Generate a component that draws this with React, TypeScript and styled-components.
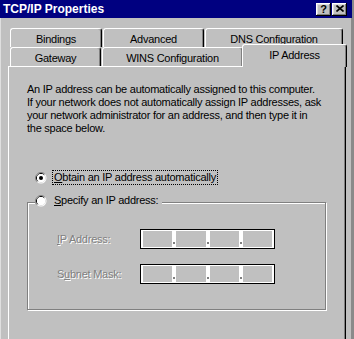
import React from "react";
import styled, { createGlobalStyle, css } from "styled-components";

const GlobalStyle = createGlobalStyle`
  html, body {
    margin: 0;
    padding: 0;
    background: #c0c0c0;
    overflow: hidden;
  }
  body {
    font-family: "Liberation Sans", Arial, sans-serif;
    font-size: 11px;
    letter-spacing: -0.25px;
    color: #000;
  }
`;

const Window = styled.div`
  width: 354px;
  height: 339px;
  box-sizing: border-box;
  background: #c0c0c0;
  box-shadow: inset 1px 0 #dfdfdf, inset -3px 0 #8a8a8a;
  display: flex;
  flex-direction: column;
  overflow: hidden;
`;

const TitleBar = styled.div`
  width: 352px;
  height: 18px;
  flex: none;
  box-sizing: border-box;
  padding: 0 5px 0 3px;
  background: #000080;
  color: #fff;
  display: flex;
  align-items: center;
  justify-content: space-between;
`;

const Title = styled.span`
  font-size: 12px;
  font-weight: bold;
  letter-spacing: 0;
`;

const TitleButtons = styled.div`
  display: flex;
  gap: 1px;
`;

const TitleButton = styled.div`
  width: 15px;
  height: 13px;
  box-sizing: border-box;
  background: #c0c0c0;
  box-shadow: inset -1px -1px #000, inset 1px 1px #fff, inset -2px -2px #808080,
    inset 2px 2px #dfdfdf;
  display: flex;
  align-items: center;
  justify-content: center;
  padding-bottom: 1px;
  color: #000;
  font-size: 11px;
  font-weight: bold;
  letter-spacing: 0;
`;

const Body = styled.div`
  flex: 1;
  display: flex;
  flex-direction: column;
  padding: 10px 0 0 8px;
`;

const TabRows = styled.div`
  display: flex;
  flex-direction: column;
  padding-left: 2px;
  position: relative;
  z-index: 1;
`;

const TabRow = styled.div`
  display: flex;
  align-items: flex-end;
  gap: 1px;
  height: 19px;
`;

const Tab = styled.div<{ $w: number; $selected?: boolean }>`
  width: ${(p) => p.$w}px;
  height: 19px;
  box-sizing: border-box;
  border-top: 1px solid #fff;
  border-left: 1px solid #fff;
  border-right: 1px solid #000;
  border-radius: 3px 3px 0 0;
  box-shadow: inset -1px 0 #808080;
  background: #c0c0c0;
  display: flex;
  align-items: center;
  justify-content: center;
  padding-top: 1px;
  white-space: nowrap;
  ${(p) =>
    p.$selected &&
    css`
      height: 23px;
      margin-left: -2px;
      margin-bottom: -1px;
      padding-top: 0;
      padding-bottom: 3px;
    `}
`;

const Panel = styled.div`
  width: 338px;
  flex: 1;
  box-sizing: border-box;
  border-top: 1px solid #fff;
  border-left: 1px solid #fff;
  border-right: 1px solid #000;
  box-shadow: inset -1px 0 #808080;
  padding: 16px 18px 0 18px;
`;

const Intro = styled.p`
  margin: 0;
  line-height: 13px;
  white-space: nowrap;
`;

const RadioRow = styled.div`
  display: flex;
  align-items: center;
  height: 15px;
  margin-top: 35px;
  padding-left: 8px;
`;

const RadioLabel = styled.span<{ $focused?: boolean }>`
  margin-left: 5px;
  padding: 0 1px;
  line-height: 13px;
  border: 1px dotted ${(p) => (p.$focused ? "#000" : "transparent")};
  white-space: nowrap;
`;

const Key = styled.span`
  text-decoration: underline;
`;

const Group = styled.fieldset`
  margin: 8px 0 0 0;
  padding: 0;
  width: 299px;
  box-sizing: border-box;
  border: 1px solid #808080;
  box-shadow: 1px 1px 0 #fff, inset 1px 1px 0 #fff;
`;

const Legend = styled.legend`
  margin-left: 7px;
  padding: 0 2px 3px 0;
  background: #c0c0c0;
  display: flex;
  align-items: center;
  height: 15px;
`;

const GroupBody = styled.div`
  display: flex;
  flex-direction: column;
  gap: 15px;
  padding: 18px 0 25px 29px;
`;

const FieldRow = styled.div`
  display: flex;
  align-items: center;
`;

const DisabledLabel = styled.span`
  width: 83px;
  color: #808080;
  text-shadow: 1px 1px 0 #fff;
  white-space: nowrap;
`;

const IpField = styled.div`
  width: 135px;
  height: 20px;
  box-sizing: border-box;
  border: 1px solid #000;
  background: #fff;
  padding: 1px 2px;
  display: flex;
`;

const Octet = styled.div`
  flex: 1;
  background: #c0c0c0;
`;

const Dot = styled.div`
  width: 4px;
  display: flex;
  flex-direction: column;
  justify-content: flex-end;
  padding: 0 0 3px 1px;
  box-sizing: border-box;

  &::after {
    content: "";
    width: 2px;
    height: 2px;
    background: #808080;
  }
`;

const Radio = ({ checked }: { checked?: boolean }) => (
  <svg width="12" height="12" viewBox="0 0 12 12" style={{ flex: "none" }}>
    <circle cx="6" cy="6" r="5.5" fill="#fff" />
    <path d="M2.1 9.9 A5.5 5.5 0 0 1 9.9 2.1" fill="none" stroke="#808080" />
    <circle cx="6" cy="6" r="4.5" fill="none" stroke="#dfdfdf" />
    <path d="M2.8 9.2 A4.5 4.5 0 0 1 9.2 2.8" fill="none" stroke="#000" />
    <circle cx="6" cy="6" r="4" fill="#fff" />
    {checked && <circle cx="6" cy="6" r="2" fill="#000" />}
  </svg>
);

const CloseGlyph = () => (
  <svg width="8" height="7" viewBox="0 0 8 7">
    <path d="M0.5 0.5 L7.5 6.5 M7.5 0.5 L0.5 6.5" stroke="#000" strokeWidth="1.6" />
  </svg>
);

const IpAddressInput = () => (
  <IpField>
    <Octet />
    <Dot />
    <Octet />
    <Dot />
    <Octet />
    <Dot />
    <Octet />
  </IpField>
);

export default function App() {
  return (
    <>
      <GlobalStyle />
      <Window>
        <TitleBar>
          <Title>TCP/IP Properties</Title>
          <TitleButtons>
            <TitleButton>?</TitleButton>
            <TitleButton>
              <CloseGlyph />
            </TitleButton>
          </TitleButtons>
        </TitleBar>
        <Body>
          <TabRows>
            <TabRow>
              <Tab $w={92}>Bindings</Tab>
              <Tab $w={101}>Advanced</Tab>
              <Tab $w={138}>DNS Configuration</Tab>
            </TabRow>
            <TabRow>
              <Tab $w={91}>Gateway</Tab>
              <Tab $w={141}>WINS Configuration</Tab>
              <Tab $w={105} $selected>
                IP Address
              </Tab>
            </TabRow>
          </TabRows>
          <Panel>
            <Intro>
              An IP address can be automatically assigned to this computer.
              <br />
              If your network does not automatically assign IP addresses, ask
              <br />
              your network administrator for an address, and then type it in
              <br />
              the space below.
            </Intro>
            <RadioRow>
              <Radio checked />
              <RadioLabel $focused>
                <Key>O</Key>btain an IP address automatically
              </RadioLabel>
            </RadioRow>
            <Group>
              <Legend>
                <Radio />
                <RadioLabel>
                  <Key>S</Key>pecify an IP address:
                </RadioLabel>
              </Legend>
              <GroupBody>
                <FieldRow>
                  <DisabledLabel>
                    <Key>I</Key>P Address:
                  </DisabledLabel>
                  <IpAddressInput />
                </FieldRow>
                <FieldRow>
                  <DisabledLabel>
                    S<Key>u</Key>bnet Mask:
                  </DisabledLabel>
                  <IpAddressInput />
                </FieldRow>
              </GroupBody>
            </Group>
          </Panel>
        </Body>
      </Window>
    </>
  );
}
